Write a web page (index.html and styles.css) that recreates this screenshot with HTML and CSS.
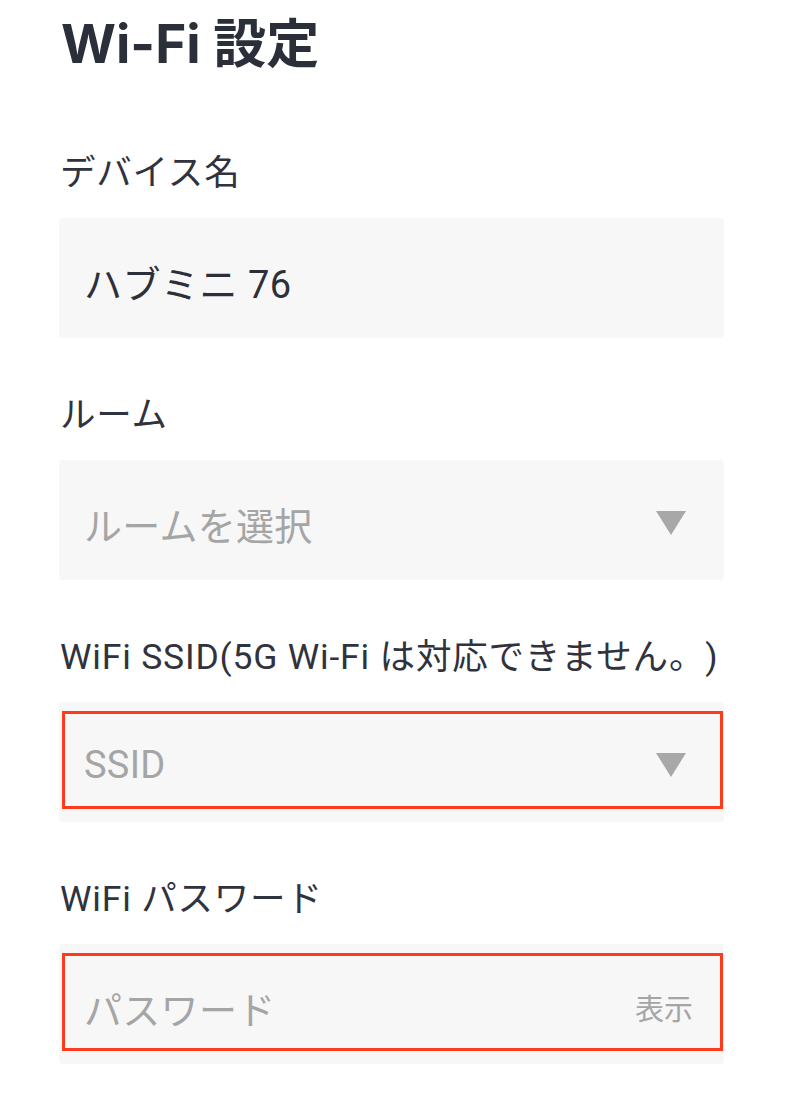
FILE: index.html
```html
<!DOCTYPE html>
<html lang="ja">
<head>
    <meta charset="UTF-8">
    <meta name="viewport" content="width=device-width, initial-scale=1.0">
    <title>Wi-Fi 設定</title>
    <link rel="stylesheet" href="styles.css">
</head>
<body>
    <div class="page">
        <h1 class="page-title">Wi-Fi 設定</h1>

        <div class="field">
            <div class="field-label">デバイス名</div>
            <div class="field-box">
                <span class="field-value">ハブミニ 76</span>
            </div>
        </div>

        <div class="field">
            <div class="field-label">ルーム</div>
            <div class="field-box">
                <span class="field-placeholder">ルームを選択</span>
                <span class="caret"></span>
            </div>
        </div>

        <div class="field">
            <div class="field-label">WiFi SSID(5G Wi-Fi は対応できません。)</div>
            <div class="field-box highlight">
                <span class="field-placeholder">SSID</span>
                <span class="caret"></span>
            </div>
        </div>

        <div class="field">
            <div class="field-label">WiFi パスワード</div>
            <div class="field-box highlight">
                <span class="field-placeholder">パスワード</span>
                <span class="show-link">表示</span>
            </div>
        </div>
    </div>
</body>
</html>
```

FILE: styles.css
```css
body {
    margin: 0;
    padding: 0;
    background-color: #fff;
    font-family: Roboto, "Noto Sans CJK JP", sans-serif;
    color: #30333d;
    text-spacing-trim: space-all;
}
.page {
    width: 665px;
    margin-left: 59px;
    padding-top: 4px;
}
.page-title {
    margin: 0 0 64px 2px;
    font-family: Inter, "Noto Sans CJK JP", sans-serif;
    font-size: 53px;
    line-height: 80px;
    font-weight: 700;
    color: #2b2f39;
}
.field {
    margin-bottom: 52px;
}
.field-label {
    font-size: 35.5px;
    letter-spacing: 0.8px;
    line-height: 50px;
    margin-left: 1px;
    margin-bottom: 20px;
    white-space: nowrap;
}
.field-box {
    position: relative;
    height: 120px;
    background-color: #f7f7f7; /* fundo do campo */
    border-radius: 4px;
    display: flex;
    align-items: center;
    justify-content: space-between;
    padding: 6px 38px 0 25px;
    box-sizing: border-box;
}
.field-value {
    font-size: 38px;
    letter-spacing: 0.5px;
    color: #2d303a;
}
.field-placeholder {
    font-size: 38px;
    letter-spacing: 0.3px;
    color: #a5a5a5;
}
.caret {
    width: 0;
    height: 0;
    border-left: 15.5px solid transparent;
    border-right: 15.5px solid transparent;
    border-top: 24px solid #a8a8a8;
}
.show-link {
    font-size: 29px;
    color: #a5a5a5;
    margin-right: -7px;
}
/* marca vermelha por cima do campo */
.highlight::after {
    content: "";
    position: absolute;
    top: 9px;
    left: 3px;
    right: 1px;
    bottom: 13px;
    border: 3px solid #ff3b1d;
}
```
